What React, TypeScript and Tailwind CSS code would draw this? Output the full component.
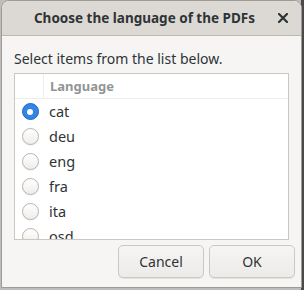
import React from "react";

const langs = ["cat", "deu", "eng", "fra", "ita", "osd"];

function Radio({ checked }: { checked: boolean }) {
  if (checked) {
    return (
      <div className="w-[17px] h-[17px] rounded-full bg-[#3584e4] border border-[#1b6acb] flex items-center justify-center">
        <div className="w-[6px] h-[6px] rounded-full bg-white" />
      </div>
    );
  }
  return (
    <div className="w-[17px] h-[17px] rounded-full border border-[#b9b3ad] bg-gradient-to-b from-[#ffffff] to-[#efedeb] shadow-[0_1px_0_rgba(0,0,0,0.06)]" />
  );
}

export default function App() {
  return (
    <div
      className="w-[304px] h-[290px] bg-[#bdbdbd] relative overflow-hidden"
      style={{ fontFamily: '"Noto Sans", "Open Sans", sans-serif' }}
    >
      <div className="absolute right-0 top-0 w-[3px] h-full bg-[#4a4a4a]" />
      <div className="absolute left-[1px] top-0 w-[301px] h-[288px] bg-[#f6f5f4] rounded-t-[8px] border border-[#9e9a95] flex flex-col overflow-hidden">
        <div className="h-[35px] shrink-0 bg-[#dcd9d5] border-b border-[#bfb8b1] flex items-center relative">
          <div className="flex-1 text-center text-[13.5px] font-bold text-[#2e3436] pr-[14px]">
            Choose the language of the PDFs
          </div>
          <div className="absolute right-[10px] top-[9px] w-[16px] h-[16px] flex items-center justify-center">
            <svg width="10" height="10" viewBox="0 0 10 10">
              <path d="M1 1 L9 9 M9 1 L1 9" stroke="#2e3436" strokeWidth="2.2" strokeLinecap="square" />
            </svg>
          </div>
        </div>
        <div className="px-[12px] pt-[13px] text-[14px] text-[#2e3436] leading-[20px]">
          Select items from the list below.
        </div>
        <div className="mx-[12px] mt-[4px] h-[167px] border border-[#cdc7c2] bg-white overflow-hidden">
          <div className="h-[25px] flex border-b border-[#efedec]">
            <div className="w-[29px] border-r border-[#efedec]" />
            <div className="pl-[6px] text-[13px] font-bold text-[#929595] leading-[25px]">Language</div>
          </div>
          {langs.map((l, i) => (
            <div key={l} className="h-[25px] flex items-center">
              <div className="w-[30px] flex justify-center">
                <Radio checked={i === 0} />
              </div>
              <div className="pl-[4px] text-[14.5px] text-[#2e3436]">{l}</div>
            </div>
          ))}
        </div>
        <div className="flex justify-end gap-[5px] pr-[6px] pt-[5px]">
          {["Cancel", "OK"].map((b) => (
            <div
              key={b}
              className="w-[86px] h-[33px] rounded-[5px] border border-[#cdc7c2] bg-gradient-to-b from-[#f6f5f4] to-[#edebe9] shadow-[0_1px_0_rgba(0,0,0,0.07)] flex items-center justify-center text-[14px] text-[#2e3436]"
            >
              {b}
            </div>
          ))}
        </div>
      </div>
    </div>
  );
}
